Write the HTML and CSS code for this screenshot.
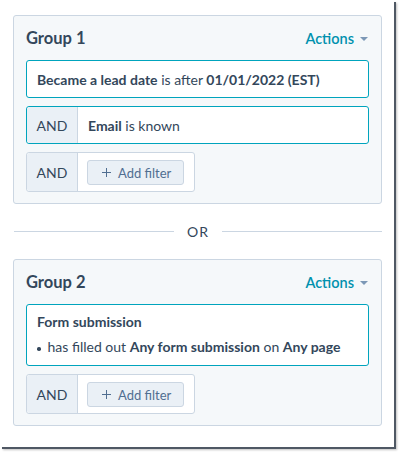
FILE: index.html
```html
<!DOCTYPE html>
<html>
<head>
<meta charset="utf-8">
<link rel="stylesheet" href="styles.css">
</head>
<body>
<div class="window">
  <div class="group">
    <div class="group-head">
      <span class="group-title">Group 1</span>
      <span class="actions">Actions <span class="caret"></span></span>
    </div>
    <div class="filter"><span class="txt"><b>Became a lead date</b> is after <b>01/01/2022 (EST)</b></span></div>
    <div class="filter joined">
      <span class="and">AND</span>
      <span class="txt"><b>Email</b> is known</span>
    </div>
    <div class="add-row">
      <span class="and">AND</span>
      <span class="add-cell"><button class="add-btn"><span class="plus"></span>Add filter</button></span>
    </div>
  </div>

  <div class="or"><span class="or-line"></span><span class="or-text">OR</span><span class="or-line"></span></div>

  <div class="group">
    <div class="group-head">
      <span class="group-title">Group 2</span>
      <span class="actions">Actions <span class="caret"></span></span>
    </div>
    <div class="filter multi">
      <div class="ftitle">Form submission</div>
      <div class="fline"><span class="dot"></span>has filled out <b>Any form submission</b> on <b>Any page</b></div>
    </div>
    <div class="add-row">
      <span class="and">AND</span>
      <span class="add-cell"><button class="add-btn"><span class="plus"></span>Add filter</button></span>
    </div>
  </div>
</div>
</body>
</html>
```
FILE: styles.css
```css
html, body {
  margin: 0;
  padding: 0;
  background: #ffffff;
}
body {
  width: 400px;
  height: 452px;
  overflow: hidden;
  font-family: "Lato", "Noto Sans", sans-serif;
  color: #33475b;
}
.window {
  width: 394px;
  height: 447px;
  overflow: hidden;
  background: #ffffff;
  box-sizing: border-box;
  padding: 15px 12px 0 13px;
  box-shadow: 2px 2px 0 #4f5864, 3px 3px 2px rgba(0, 0, 0, 0.25);
}
.group {
  background: #f5f8fa;
  border: 1px solid #cbd6e2;
  border-radius: 3px;
  padding: 0 12px 11px 12px;
}
.group-head {
  display: flex;
  justify-content: space-between;
  align-items: center;
  padding-top: 12px;
  height: 20px;
  margin-bottom: 12px;
}
.group-title {
  font-size: 16.5px;
  font-weight: 700;
  line-height: 20px;
}
.actions {
  font-size: 14.5px;
  font-weight: 600;
  color: #0091ae;
  display: flex;
  align-items: center;
  gap: 2px;
  padding-right: 1px;
}
.caret {
  width: 0;
  height: 0;
  border-left: 4px solid transparent;
  border-right: 4px solid transparent;
  border-top: 4px solid #7c98b6;
  margin-left: 4px;
  margin-top: 1px;
}
.filter {
  background: #ffffff;
  border: 1px solid #00a4bd;
  border-radius: 3px;
  height: 36px;
  display: flex;
  align-items: center;
  font-size: 14px;
  margin-bottom: 8px;
}
.filter .txt {
  padding-left: 10px;
}
b {
  font-weight: 700;
}
.and {
  width: 50px;
  align-self: stretch;
  display: flex;
  align-items: center;
  justify-content: center;
  background: #eaf0f6;
  border-right: 1px solid #cbd6e2;
  border-radius: 3px 0 0 3px;
  font-size: 14px;
}
.add-row {
  display: inline-flex;
  height: 38px;
  background: #ffffff;
  border: 1px solid #cbd6e2;
  border-radius: 3px;
}
.add-cell {
  display: flex;
  align-items: center;
  padding: 0 10px 0 9px;
}
.add-btn {
  display: flex;
  align-items: center;
  height: 25px;
  box-sizing: border-box;
  background: #eaf0f6;
  border: 1px solid #cbd6e2;
  border-radius: 3px;
  padding: 0 12px 0 14px;
  font-family: inherit;
  font-size: 13px;
  color: #506e91;
  margin-top: 1px;
}
.plus {
  position: relative;
  width: 9px;
  height: 9px;
  margin-right: 7px;
}
.plus::before, .plus::after {
  content: "";
  position: absolute;
  background: #506e91;
}
.plus::before {
  left: 0;
  top: 4px;
  width: 9px;
  height: 1.4px;
}
.plus::after {
  left: 3.8px;
  top: 0;
  width: 1.4px;
  height: 9px;
}
.or {
  display: flex;
  align-items: center;
  height: 55px;
  gap: 13px;
  padding: 0 0 0 1px;
}
.or-line {
  flex: 1;
  height: 1px;
  background: #cbd6e2;
}
.or-text {
  font-size: 14px;
  font-weight: 400;
  letter-spacing: 1px;
}
.filter.multi {
  height: auto;
  display: block;
  padding: 7px 10px 8px 10px;
}
.ftitle {
  font-weight: 700;
  line-height: 20px;
}
.fline {
  line-height: 20px;
  margin-top: 5px;
  display: flex;
  align-items: center;
  white-space: pre;
}
.dot {
  width: 3.5px;
  height: 3.5px;
  border-radius: 50%;
  background: #33475b;
  margin: 4px 7px 0 0;
}
```
